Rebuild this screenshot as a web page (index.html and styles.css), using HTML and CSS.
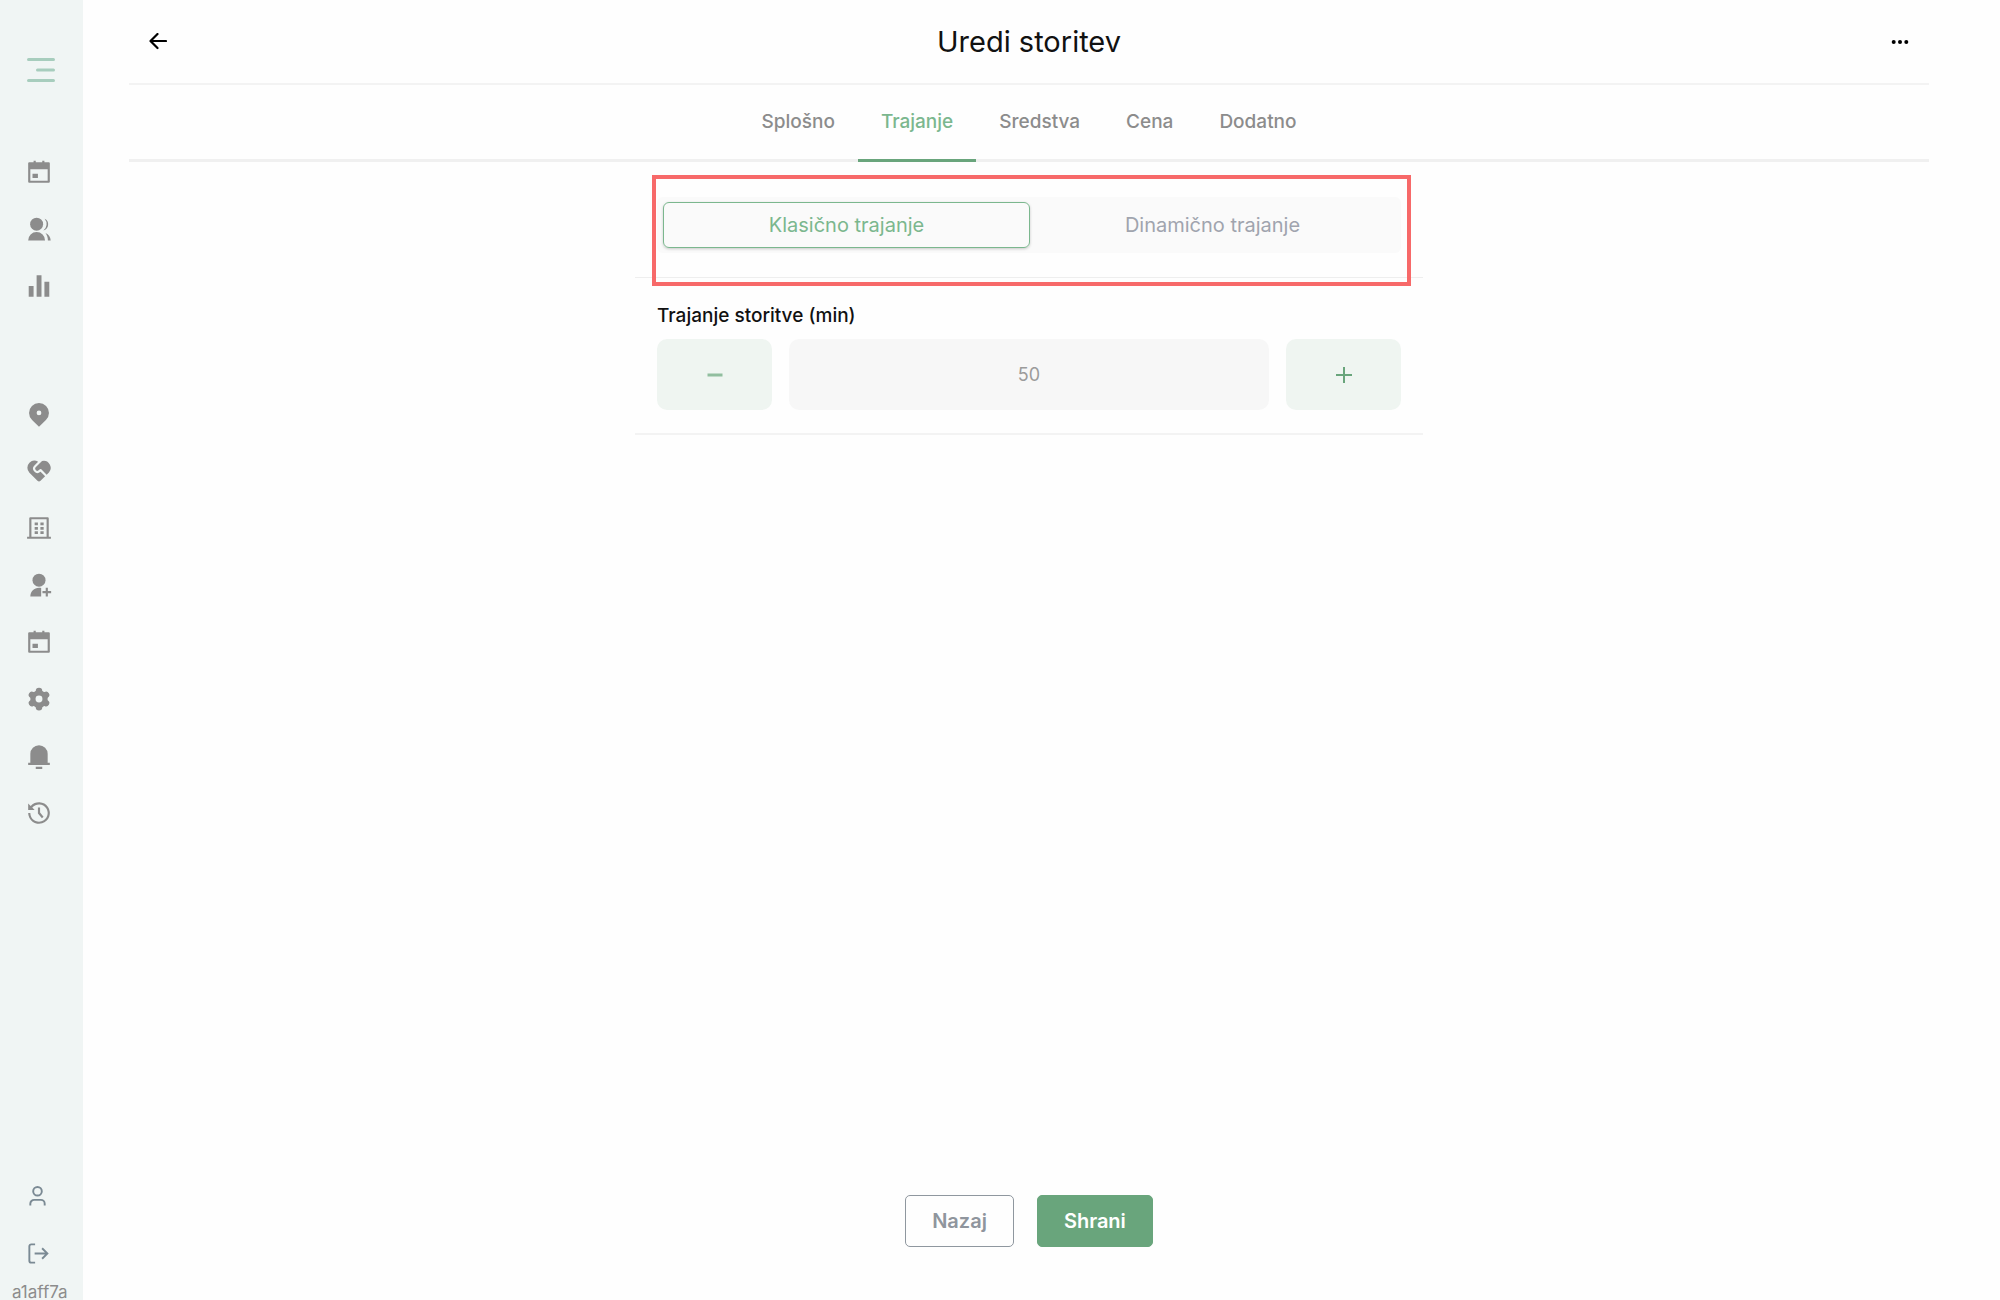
FILE: index.html
```
<!DOCTYPE html>
<html lang="sl">
<head>
<meta charset="utf-8">
<title>Uredi storitev</title>
<link rel="stylesheet" href="styles.css">
</head>
<body>

<aside class="sidebar">
	<button class="menu" aria-label="Meni">
		<svg width="28" height="26" viewBox="0 0 28 26"><path d="M1.500 2.500h25M10.500 13h16M1.500 23.500h25" fill="none" stroke="currentColor" stroke-width="3" stroke-linecap="round"/></svg>
	</button>

	<nav class="nav nav-main">
		<a href="#" aria-label="Koledar"><svg class="icon" viewBox="0 0 24 24"><path fill-rule="evenodd" d="M7 1.500h2V3h6V1.500h2V3h4a1 1 0 0 1 1 1v17a1 1 0 0 1-1 1H3a1 1 0 0 1-1-1V4a1 1 0 0 1 1-1h4zM4 9.500V20h16V9.500zM6 13.500h5v4H6z"/></svg></a>
		<a href="#" aria-label="Stranke"><svg class="icon" viewBox="0 0 24 24"><circle cx="9.800" cy="7.500" r="6"/><path d="M2 22.500a7.800 7.800 0 0 1 15.600 0zM16 13.300a7.300 7.300 0 0 0 1.200-10.700 5.700 5.700 0 0 1-1.200 10.700zM18 15.800c3 1.400 4.600 3.600 4.800 6.700h-2.600c0-2.600-.7-4.600-2.200-6.700z"/></svg></a>
		<a href="#" aria-label="Statistika"><svg class="icon" viewBox="0 0 24 24"><path d="M2.500 12H7v10H2.500zM9.800 2h4.500v20H9.800zM17 8h4.500v14H17z"/></svg></a>
	</nav>

	<nav class="nav nav-admin">
		<a href="#" aria-label="Lokacije"><svg class="icon" viewBox="0 0 24 24"><path fill-rule="evenodd" d="M18.400 17.600 12 23.800l-6.400-6.200a9.200 9.200 0 1 1 12.800 0zM12 8.800a2.200 2.200 0 1 0 0 4.400 2.200 2.200 0 0 0 0-4.400z"/></svg></a>
		<a href="#" aria-label="Storitve"><svg class="icon" viewBox="0 0 24 24"><path d="M14.121 10.480a1 1 0 0 0-1.414 0l-.707.706a2 2 0 1 1-2.828-2.828l5.630-5.632a6.500 6.500 0 0 1 6.377 10.568l-2.108 2.135-4.950-4.950zM3.161 4.468a6.503 6.503 0 0 1 8.009-.938L7.757 6.944a4 4 0 0 0 5.513 5.794l.144-.137 4.243 4.242-4.243 4.243a2 2 0 0 1-2.828 0L3.160 13.660a6.500 6.500 0 0 1 0-9.192z"/></svg></a>
		<a href="#" aria-label="Podjetje"><svg class="icon" viewBox="0 0 24 24"><path fill-rule="evenodd" d="M3 20V3a1 1 0 0 1 1-1h16a1 1 0 0 1 1 1v17h2v2H1v-2zM5 4v16h14V4z"/><path d="M8 7h3v2.500H8zM13.300 7h3v2.500h-3zM8 11h3v2.500H8zM13.300 11h3v2.500h-3zM8 15h3v2.500H8zM13.300 15h3v2.500h-3z"/></svg></a>
		<a href="#" aria-label="Dodaj osebo"><svg class="icon" viewBox="0 0 24 24"><circle cx="12" cy="7.500" r="6"/><path d="M14 14.700V22.500H4c0-5 4.500-9 10-7.800zM18.200 14.500h2V17.500h3v2h-3v3h-2v-3h-3v-2h3z"/></svg></a>
		<a href="#" aria-label="Rezervacije"><svg class="icon" viewBox="0 0 24 24"><path fill-rule="evenodd" d="M7 1.500h2V3h6V1.500h2V3h4a1 1 0 0 1 1 1v17a1 1 0 0 1-1 1H3a1 1 0 0 1-1-1V4a1 1 0 0 1 1-1h4zM4 9.500V20h16V9.500zM6 13.500h5v4H6z"/></svg></a>
		<a href="#" aria-label="Nastavitve"><svg class="icon" viewBox="0 0 24 24"><path d="M12 4.500v15M5.500 8.250l13 7.500M18.500 8.250l-13 7.500" stroke="currentColor" stroke-width="6" stroke-linecap="round"/><circle cx="12" cy="12" r="8"/><circle class="hole" cx="12" cy="12" r="3.200"/></svg></a>
		<a href="#" aria-label="Obvestila"><svg class="icon" viewBox="0 0 24 24"><path d="M20 18.200h2v2H2v-2h2V10a8 8 0 0 1 16 0zM9 22h6v2H9z"/></svg></a>
		<a href="#" aria-label="Zgodovina"><svg class="icon" viewBox="0 0 24 24"><path d="M4.300 5.600A10 10 0 1 1 2 12h2a8 8 0 1 0 1.800-5L8 9.200H2V3.300zM11 7h2v4.600l3.200 3.900-1.500 1.400L11 12.400z"/></svg></a>
	</nav>

	<nav class="nav nav-user">
		<a href="#" aria-label="Profil"><svg class="line-icon" viewBox="0 0 24 24"><circle cx="12" cy="6.500" r="4.500"/><path d="M4.500 21.500v-2a4 4 0 0 1 4-4h7a4 4 0 0 1 4 4v2"/></svg></a>
		<a href="#" aria-label="Odjava"><svg class="line-icon" viewBox="0 0 24 24"><path d="M9.500 2.500H5.500a2 2 0 0 0-2 2v15a2 2 0 0 0 2 2h4M9 12h13M16.800 6.500 22.300 12l-5.500 5.500"/></svg></a>
	</nav>
	<div class="version">a1aff7a</div>
</aside>

<main class="page">
	<header class="topbar">
		<button class="bare" aria-label="Nazaj na seznam"><svg width="18" height="18" viewBox="0 0 18 18"><path d="M17 8H2M8.500 1 1.500 8l7 7" fill="none" stroke="currentColor" stroke-width="2.200" stroke-linejoin="round" stroke-linecap="round"/></svg></button>
		<h1>Uredi storitev</h1>
		<button class="bare" aria-label="Več"><svg width="18" height="6" viewBox="0 0 18 6"><circle cx="2.700" cy="3" r="2"/><circle cx="9" cy="3" r="2"/><circle cx="15.300" cy="3" r="2"/></svg></button>
	</header>

	<nav class="tabs">
		<a href="#">Splošno</a>
		<a href="#" class="active">Trajanje</a>
		<a href="#">Sredstva</a>
		<a href="#">Cena</a>
		<a href="#">Dodatno</a>
	</nav>

	<form class="panel">
		<div class="mode">
			<div class="switch">
				<button type="button" class="active">Klasično trajanje</button>
				<button type="button">Dinamično trajanje</button>
			</div>
			<div class="highlight"></div>
		</div>
		<div class="duration">
			<label for="duration">Trajanje storitve (min)</label>
			<div class="stepper">
				<button type="button" aria-label="Manj"><svg width="18" height="18" viewBox="0 0 18 18"><path class="minus" d="M1.500 9h15"/></svg></button>
				<input type="text" id="duration" value="50">
				<button type="button" aria-label="Več"><svg width="18" height="18" viewBox="0 0 18 18"><path d="M1 9h16M9 1v16"/></svg></button>
			</div>
		</div>
	</form>

	<footer class="actions">
		<button class="btn">Nazaj</button>
		<button class="btn primary">Shrani</button>
	</footer>
</main>

</body>
</html>
```
FILE: styles.css
```
* { box-sizing: border-box; }
body { display: flex; margin: 0; height: 100vh; overflow: hidden; background-color: #fefefe; color: #111; font: normal 20px/24px Inter, sans-serif; }
button { padding: 0; border: none; background: none; color: inherit; font: inherit; cursor: pointer; }
svg { display: block; }
a { text-decoration: none; color: inherit; }

/* sidebar */
.sidebar { display: flex; flex-direction: column; flex: none; width: 83px; padding-top: 57px; background-color: #f0f5f4; color: #8c8c8c; }
.menu { align-self: flex-start; margin-left: 27px; color: #a7cdbd; }
.nav { display: flex; flex-direction: column; gap: 31px; padding-left: 26px; }
.nav-main { margin-top: 76px; }
.nav-admin { margin-top: 102px; }
.nav-user { margin-top: auto; gap: 34px; color: #7b8a94; }
.icon { width: 26px; height: 26px; fill: currentColor; }
.icon .hole { fill: #f0f5f4; }
.line-icon { width: 23px; height: 23px; fill: none; stroke: currentColor; stroke-width: 2; }
.version { height: 35px; padding: 17px 0 0 12px; font-size: 17px; line-height: 20px; }

/* page */
.page { display: flex; flex-direction: column; flex: 1; padding: 0 71px 53px 46px; }
.topbar { display: flex; align-items: center; justify-content: space-between; height: 85px; padding: 0 20px; border-bottom: 2px solid #f3f3f3; }
.topbar h1 { margin: 0; font-size: 29px; font-weight: 400; line-height: 34px; }
.bare { color: #000; }
.tabs { display: flex; justify-content: center; border-bottom: 3px solid #f0f0f0; color: #8c8c8c; font-size: 19px; font-weight: 500; }
.tabs a { margin-bottom: -3px; padding: 25px 23px 25px; border-bottom: 3px solid transparent; }
.tabs .active { border-color: #69a57c; color: #7bb78e; }

.panel { align-self: center; width: 788px; }
.mode { position: relative; padding: 35px 22px 24px; border-bottom: 1px solid #eee; }
.switch { display: flex; padding: 5px 6px; border-radius: 6px; background-color: #fafafa; }
.switch button { flex: 1; height: 46px; border-radius: 6px; color: #a0a4ae; }
.switch .active { border: 1px solid #7bb78e; color: #7bb78e; box-shadow: 0 1px 3px rgba(0, 0, 0, 0.2); }
.highlight { position: absolute; top: 13px; right: 12px; bottom: -9px; left: 17px; border: 4px solid #f76969; pointer-events: none; }

.duration { padding: 26px 22px 23px; border-bottom: 2px solid #f3f3f3; }
.duration label { display: block; margin-bottom: 11px; font-size: 19px; font-weight: 500; }
.stepper { display: flex; gap: 17px; height: 71px; }
.stepper button { display: flex; align-items: center; justify-content: center; flex: none; width: 115px; border-radius: 10px; background-color: #eff5f1; }
.stepper svg { fill: none; stroke: #69a57c; stroke-width: 2; }
.stepper .minus { stroke: #91be9f; stroke-width: 3; }
.stepper input { flex: 1; min-width: 0; padding: 0; border: none; border-radius: 10px; background-color: #f7f7f7; color: #9b9b9b; font: inherit; font-size: 18px; text-align: center; }

.actions { display: flex; justify-content: center; gap: 23px; margin-top: auto; }
.btn { height: 52px; padding: 0 26px; border: 1px solid #8f979f; border-radius: 5px; color: #8f959d; font-weight: 600; }
.btn.primary { border-color: #69a57c; background-color: #69a57c; color: #fff; }
```
